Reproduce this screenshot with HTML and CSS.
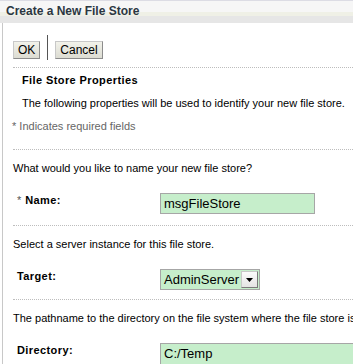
FILE: index.html
```html
<!DOCTYPE html>
<html lang="en">
<head>
  <meta charset="UTF-8">
  <title>Create a New File Store</title>
  <link rel="stylesheet" href="styles.css">
</head>
<body>

  <div class="title-bar">Create a New File Store</div>

  <div class="panel">
    <div class="toolbar">
      <button class="btn">OK</button>
      <span class="sep"></span>
      <button class="btn">Cancel</button>
    </div>

    <div class="section intro-section">
      <h2>File Store Properties</h2>
      <p class="intro">The following properties will be used to identify your new file store.</p>
      <p class="required-note">* Indicates required fields</p>
    </div>

    <div class="section">
      <p class="help">What would you like to name your new file store?</p>
      <div class="field">
        <label><span class="star">*</span> Name:</label>
        <div class="input short">msgFileStore</div>
      </div>
    </div>

    <div class="section">
      <p class="help">Select a server instance for this file store.</p>
      <div class="field">
        <label>Target:</label>
        <div class="select">
          <span class="select-value">AdminServer</span>
          <span class="select-arrow">
            <svg width="7" height="4" viewBox="0 0 7 4"><path d="M0 0h7L3.5 4z" fill="#000"/></svg>
          </span>
        </div>
      </div>
    </div>

    <div class="section section-tight">
      <p class="help nowrap">The pathname to the directory on the file system where the file store is kept.</p>
      <div class="field">
        <label>Directory:</label>
        <div class="input long">C:/Temp</div>
      </div>
    </div>
  </div>

</body>
</html>
```

FILE: styles.css
```css
/* base */
body {
  margin: 0;
  font-family: "Liberation Sans", Arial, sans-serif;
  font-size: 11px;
  color: #000;
  background: #fff;
  overflow: hidden;
}

/* title bar */
.title-bar {
  height: 22px;
  line-height: 21px;
  padding-left: 6px;
  font-weight: bold;
  font-size: 12px;
  color: #2b3642;
  border-top: 1px solid #dcdce4;
  background: linear-gradient(#f6f6f6 0, #f6f6f6 11px, #eff0e6 11px, #eff0e6 15px, #e6e6e6 15px);
}

/* content panel with left rule */
.panel {
  margin-left: 2px;
  border-left: 1px solid #c8c8c8;
  padding-left: 10px;
  min-height: 400px;
}

/* buttons */
.toolbar {
  display: flex;
  align-items: center;
  gap: 7px;
  padding-top: 12px;
  height: 25px;
  padding-bottom: 7px;
}
.btn {
  font-family: "Liberation Sans", Arial, sans-serif;
  font-size: 12px;
  height: 18px;
  padding: 0 4px;
  border: 1px solid #8c8c8c;
  border-top-color: #c8c8c8;
  border-left-color: #c8c8c8;
  background: linear-gradient(#f2f2ea, #dcdcd2);
  color: #000;
  margin-top: 4px;
}
.sep {
  width: 1px;
  height: 25px;
  background: #555;
}

/* sections separated by dotted rules */
.section {
  border-top: 1px dotted #bdbdbd;
  margin-top: 11px;
}
.intro-section {
  margin-top: 0;
  padding-bottom: 5px;
}
.section-tight {
  margin-top: 9px;
}
.section h2 {
  margin: 0;
  padding: 6px 0 0 9px;
  font-size: 11px;
  line-height: 13px;
  letter-spacing: 0.4px;
}
.intro {
  margin: 10px 0 0 9px;
  line-height: 13px;
}
.required-note {
  margin: 10px 0 0 -1px;
  line-height: 13px;
  color: #666;
}
.help {
  margin: 12px 0 0 0;
  line-height: 13px;
}
.nowrap {
  white-space: nowrap;
}

/* label + control rows */
.field {
  display: grid;
  grid-template-columns: 143px auto;
  align-items: start;
  padding: 18px 0 0 4px;
}
.field label {
  font-weight: bold;
  line-height: 13px;
  padding-top: 1px;
  letter-spacing: 0.4px;
}
.star {
  font-weight: normal;
  color: #555;
}
.input, .select {
  font-family: "Liberation Sans", Arial, sans-serif;
  font-size: 13px;
  background: #c6eecb;
  border: 1px solid #a6a6a6;
  height: 19px;
  line-height: 19px;
  padding-left: 3px;
}
.input.short {
  width: 150px;
}
.input.long {
  width: 300px;
  height: 22px;
}
.select {
  display: flex;
  align-items: center;
  width: max-content;
  height: 19px;
  padding-right: 1px;
}
.select-value {
  padding-right: 2px;
}
.select-arrow {
  width: 15px;
  height: 15px;
  display: flex;
  align-items: center;
  justify-content: center;
  background: linear-gradient(#fbfbfb, #e4e4e4);
  border: 1px solid #7a7a7a;
  border-top-color: #c8c8c8;
  border-left-color: #c8c8c8;
}
```
